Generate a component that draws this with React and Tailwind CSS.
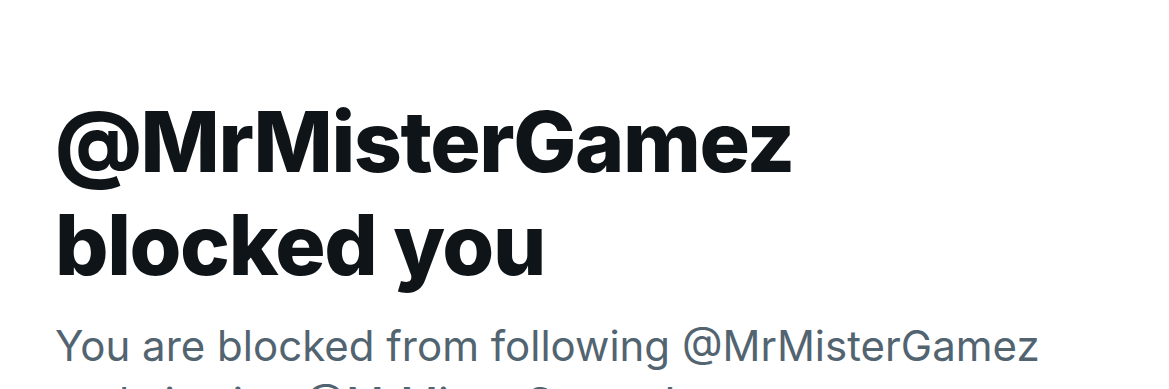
export default function App() {
  return (
    <div className="w-[1169px] h-[389px] overflow-hidden bg-white">
      <div className="pl-[55px] pt-[90px] w-[1110px]" style={{ fontFamily: "Inter, 'Noto Sans', sans-serif" }}>
        <h1 className="text-[84px] leading-[103px] font-extrabold tracking-[-0.017em] text-[#0f1419]">
          @MrMisterGamez
          <br />
          blocked you
        </h1>
        <p className="mt-[21px] text-[42px] leading-[57px] font-normal text-[#536471]">
          You are blocked from following @MrMisterGamez and viewing @MrMisterGamez’s posts.
        </p>
      </div>
    </div>
  );
}
